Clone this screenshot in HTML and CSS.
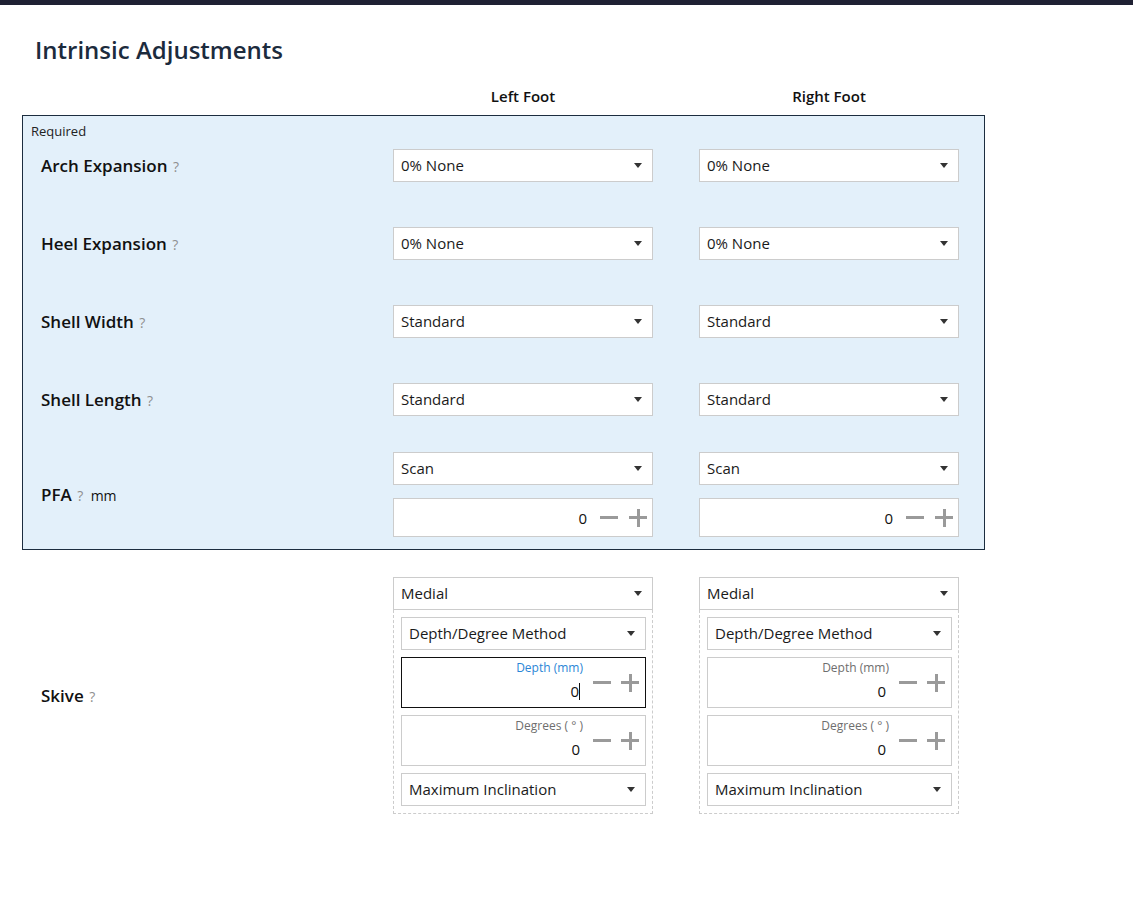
FILE: index.html
```html
<!DOCTYPE html>
<html lang="en">
<head>
<meta charset="utf-8">
<title>Intrinsic Adjustments</title>
<link rel="stylesheet" href="styles.css">
</head>
<body>
<div class="topbar"></div>
<main class="page">
  <h1 class="title">Intrinsic Adjustments</h1>

  <div class="grid colheads">
    <div></div>
    <div class="colhead">Left Foot</div>
    <div class="colhead">Right Foot</div>
  </div>

  <section class="required-box">
    <div class="required">Required</div>

    <div class="grid row">
      <div class="label">Arch Expansion <span class="help">?</span></div>
      <div class="select">0% None<span class="caret"></span></div>
      <div class="select">0% None<span class="caret"></span></div>
    </div>

    <div class="grid row">
      <div class="label">Heel Expansion <span class="help">?</span></div>
      <div class="select">0% None<span class="caret"></span></div>
      <div class="select">0% None<span class="caret"></span></div>
    </div>

    <div class="grid row">
      <div class="label">Shell Width <span class="help">?</span></div>
      <div class="select">Standard<span class="caret"></span></div>
      <div class="select">Standard<span class="caret"></span></div>
    </div>

    <div class="grid row">
      <div class="label">Shell Length <span class="help">?</span></div>
      <div class="select">Standard<span class="caret"></span></div>
      <div class="select">Standard<span class="caret"></span></div>
    </div>

    <div class="grid row row-pfa">
      <div class="label">PFA <span class="help">?</span> <span class="unit">mm</span></div>
      <div class="stack">
        <div class="select">Scan<span class="caret"></span></div>
        <div class="stepper">
          <span class="num">0</span>
          <span class="minus"></span>
          <span class="plus"></span>
        </div>
      </div>
      <div class="stack">
        <div class="select">Scan<span class="caret"></span></div>
        <div class="stepper">
          <span class="num">0</span>
          <span class="minus"></span>
          <span class="plus"></span>
        </div>
      </div>
    </div>
  </section>

  <div class="grid row-skive">
    <div class="label">Skive <span class="help">?</span></div>

    <div class="skive">
      <div class="select">Medial<span class="caret"></span></div>
      <div class="skive-body">
        <div class="select">Depth/Degree Method<span class="caret"></span></div>
        <div class="field focused">
          <div class="field-text">
            <span class="field-label">Depth (mm)</span>
            <span class="field-value">0<span class="cursor"></span></span>
          </div>
          <span class="minus"></span>
          <span class="plus"></span>
        </div>
        <div class="field">
          <div class="field-text">
            <span class="field-label">Degrees ( ° )</span>
            <span class="field-value">0</span>
          </div>
          <span class="minus"></span>
          <span class="plus"></span>
        </div>
        <div class="select">Maximum Inclination<span class="caret"></span></div>
      </div>
    </div>

    <div class="skive">
      <div class="select">Medial<span class="caret"></span></div>
      <div class="skive-body">
        <div class="select">Depth/Degree Method<span class="caret"></span></div>
        <div class="field">
          <div class="field-text">
            <span class="field-label">Depth (mm)</span>
            <span class="field-value">0</span>
          </div>
          <span class="minus"></span>
          <span class="plus"></span>
        </div>
        <div class="field">
          <div class="field-text">
            <span class="field-label">Degrees ( ° )</span>
            <span class="field-value">0</span>
          </div>
          <span class="minus"></span>
          <span class="plus"></span>
        </div>
        <div class="select">Maximum Inclination<span class="caret"></span></div>
      </div>
    </div>
  </div>
</main>
</body>
</html>
```

FILE: styles.css
```css
* { box-sizing: border-box; }

html, body {
  margin: 0;
  padding: 0;
  background: #ffffff;
}

body {
  font-family: "Open Sans", "Noto Sans", sans-serif;
  color: #111111;
}

.topbar {
  height: 5px;
  background: #1f2133;
}

.page {
  padding-left: 22px;
}

.title {
  margin: 29px 0 0 13px;
  font-size: 24px;
  line-height: 32px;
  font-weight: 600;
  color: #1c2b3d;
}

.grid {
  display: grid;
  grid-template-columns: 324px 260px 260px;
  column-gap: 46px;
}

.colheads {
  margin-top: 20px;
  margin-bottom: 9px;
  padding-left: 1px;
}

.colhead {
  text-align: center;
  font-size: 15px;
  line-height: 20px;
  font-weight: 600;
  color: #111;
}

.required-box {
  width: 963px;
  background: #e3f0fa;
  border: 1px solid #1c2d3f;
}

.required {
  font-size: 13px;
  line-height: 16px;
  padding: 7px 0 0 8px;
  margin-bottom: -13px;
  color: #222;
}

.row {
  height: 78px;
  align-items: center;
}

.label {
  padding-left: 18px;
  font-size: 17px;
  font-weight: 600;
  color: #111;
}

.help {
  font-size: 14px;
  font-weight: 400;
  color: #8f8f8f;
  margin-left: 1px;
}

.unit {
  font-size: 14px;
  font-weight: 400;
  color: #111;
  margin-left: 3px;
}

.select {
  position: relative;
  height: 33px;
  background: #ffffff;
  border: 1px solid #cccccc;
  padding-left: 7px;
  font-size: 15px;
  line-height: 31px;
  color: #1a1a1a;
}

.caret {
  position: absolute;
  right: 10px;
  top: 13px;
  width: 0;
  height: 0;
  border-left: 4.5px solid transparent;
  border-right: 4.5px solid transparent;
  border-top: 5px solid #333333;
}

.row-pfa {
  height: auto;
  padding: 14px 0 12px;
}

.stack {
  display: flex;
  flex-direction: column;
  gap: 13px;
}

.stepper {
  height: 39px;
  background: #ffffff;
  border: 1px solid #cccccc;
  display: flex;
  align-items: center;
  justify-content: flex-end;
  padding-right: 5px;
  font-size: 15px;
}

.stepper .num {
  margin-right: 13px;
}

.minus {
  position: relative;
  width: 18px;
  height: 18px;
  flex: none;
}

.minus::before {
  content: "";
  position: absolute;
  left: 0;
  right: 0;
  top: 7px;
  height: 3px;
  background: #9a9a9a;
}

.plus {
  position: relative;
  width: 18px;
  height: 18px;
  margin-left: 11px;
  flex: none;
}

.plus::before {
  content: "";
  position: absolute;
  left: 0;
  right: 0;
  top: 7.5px;
  height: 3px;
  background: #9a9a9a;
}

.plus::after {
  content: "";
  position: absolute;
  top: 0;
  bottom: 0;
  left: 7.5px;
  width: 3px;
  background: #9a9a9a;
}

.row-skive {
  margin-top: 27px;
  padding-left: 1px;
  align-items: center;
}

.skive {
  display: flex;
  flex-direction: column;
}

.skive-body {
  border: 1px dashed #cccccc;
  border-top: none;
  padding: 7px 6px 7px 7px;
  display: flex;
  flex-direction: column;
  gap: 7px;
}

.field {
  height: 51px;
  background: #ffffff;
  border: 1px solid #cccccc;
  display: flex;
  align-items: center;
  padding-right: 6px;
}

.field.focused {
  border-color: #111111;
}

.field-text {
  flex: 1;
  align-self: stretch;
  display: flex;
  flex-direction: column;
  align-items: flex-end;
  padding-right: 10px;
  padding-top: 2px;
}

.field-label {
  font-size: 12px;
  line-height: 16px;
  color: #6e6e6e;
}

.focused .field-label {
  color: #2b86d6;
}

.field-value {
  margin-top: 5px;
  font-size: 15px;
  line-height: 20px;
  color: #111;
  padding-right: 3px;
}

.cursor {
  display: inline-block;
  width: 1px;
  height: 17px;
  background: #111;
  vertical-align: -3px;
}

.field .plus {
  margin-left: 10px;
}
```
